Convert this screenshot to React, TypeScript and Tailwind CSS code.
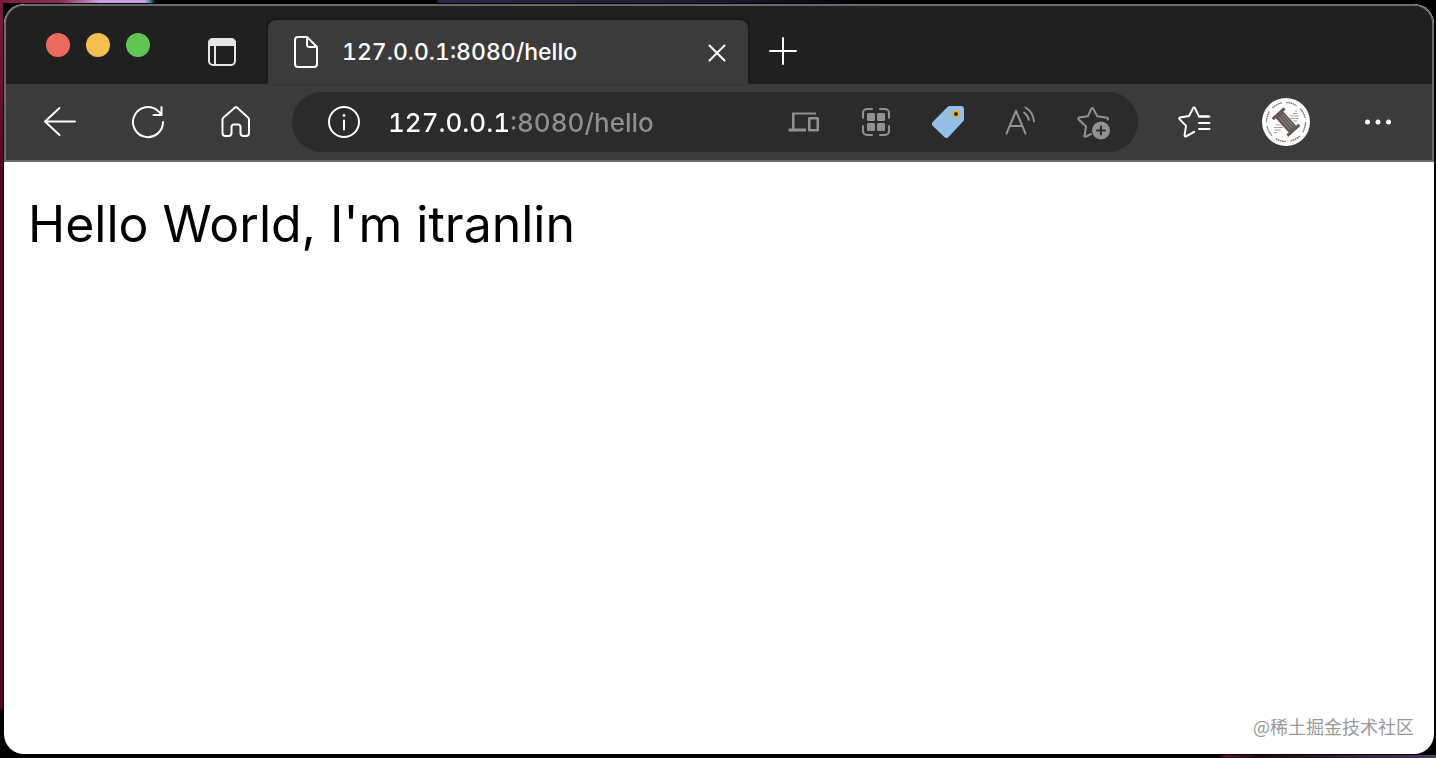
import type { ReactNode } from 'react';

const HOST = '127.0.0.1';
const PATH = ':8080/hello';

function IconButton({ label, children }: { label: string; children: ReactNode }) {
  return (
    <button aria-label={label} className="flex size-8 shrink-0 items-center justify-center text-white">
      {children}
    </button>
  );
}

function Stroke({ children, width = 2 }: { children: ReactNode; width?: number }) {
  return (
    <svg viewBox="0 0 32 32" className="size-8 overflow-visible" fill="none" stroke="currentColor" strokeWidth={width} strokeLinecap="round" strokeLinejoin="round">
      {children}
    </svg>
  );
}

function TabStrip() {
  return (
    <div className="flex h-[78px] items-end bg-[#202020]">
      <div className="flex h-[78px] items-start gap-4 pt-[27px] pl-10">
        <button aria-label="Close window" className="size-6 rounded-full bg-[#ed6a5e]" />
        <button aria-label="Minimize window" className="size-6 rounded-full bg-[#f5bf4f]" />
        <button aria-label="Zoom window" className="size-6 rounded-full bg-[#61c554]" />
      </div>
      <div className="flex h-16 items-center pr-[30px] pl-[56px]">
        <button aria-label="Tab actions" className="size-8 text-[#e6e6e6]">
          <svg viewBox="0 0 32 32" className="size-8" fill="none" stroke="currentColor" strokeWidth="2">
            <rect x="3" y="3" width="26" height="26" rx="4" />
            <path d="M3 9V7a4 4 0 0 1 4-4h18a4 4 0 0 1 4 4v2z" fill="currentColor" />
            <path d="M9 9v20" />
          </svg>
        </button>
      </div>
      <div className="flex h-16 w-[480px] items-center rounded-t-lg bg-[#3b3b3b] pr-[15px] pl-[22px] shadow-[0_-1px_3px_#111]">
        <svg viewBox="0 0 32 32" className="size-8 text-white" fill="none" stroke="currentColor" strokeWidth="2" strokeLinejoin="round">
          <path d="M8 1h9l10 10V28a3 3 0 0 1-3 3H8a3 3 0 0 1-3-3V4a3 3 0 0 1 3-3z" />
          <path d="M17 1v7.500a2.500 2.500 0 0 0 2.500 2.500h7.500" />
        </svg>
        <span className="ml-5 flex-1 font-[Inter,sans-serif] text-[23px] leading-8 font-medium text-white tabular-nums">{HOST + PATH}</span>
        <IconButton label="Close tab">
          <Stroke>
            <path d="M8.500 9.500l15 15M23.500 9.500l-15 15" />
          </Stroke>
        </IconButton>
      </div>
      <div className="flex h-16 items-center pl-[19px]">
        <IconButton label="New tab">
          <Stroke>
            <path d="M16 2v26M3 15h26" />
          </Stroke>
        </IconButton>
      </div>
    </div>
  );
}

function AddressBar() {
  return (
    <div className="mx-10 flex h-[60px] min-w-0 flex-1 items-center rounded-full bg-[#2b2b2b] pr-[30px] pl-9">
      <IconButton label="View site information">
        <Stroke>
          <circle cx="16" cy="16" r="15" />
          <path d="M16 14.500v9" />
          <circle cx="16" cy="9.500" r="1.400" fill="currentColor" stroke="none" />
        </Stroke>
      </IconButton>
      {/* the host is drawn brighter than the port and path */}
      <input
        aria-label="Address"
        defaultValue={HOST + PATH}
        spellCheck={false}
        className="ml-7 h-10 min-w-0 flex-1 bg-linear-to-r from-white from-[121px] to-[#8f8f8f] to-[121px] bg-clip-text font-[Inter,sans-serif] text-[26px] font-medium text-transparent tabular-nums outline-none"
      />
      <div className="flex items-center gap-10 *:text-[#929292]">
        <IconButton label="Send to your devices">
          <svg viewBox="0 0 32 32" className="size-8" fill="currentColor">
            <path d="M4 6.500h24v2H6.500v14H18v3H0.500v-3H4z" />
            <path fillRule="evenodd" d="M21.500 11h8a1.500 1.500 0 0 1 1.500 1.500v11.500a1.500 1.500 0 0 1-1.500 1.500h-8a1.500 1.500 0 0 1-1.500-1.500V12.500a1.500 1.500 0 0 1 1.500-1.500zM22.500 13.500v9.500h6v-9.500z" />
          </svg>
        </IconButton>
        <IconButton label="Apps">
          <Stroke>
            <path d="M3 12V7a4 4 0 0 1 4-4h5M20 3h5a4 4 0 0 1 4 4v5M29 20v5a4 4 0 0 1-4 4h-5M12 29H7a4 4 0 0 1-4-4v-5" />
            <g fill="currentColor" stroke="none">
              <rect x="7" y="7" width="8" height="8" rx="1.500" />
              <rect x="17" y="7" width="8" height="8" rx="1.500" />
              <rect x="7" y="17" width="8" height="8" rx="1.500" />
              <rect x="17" y="17" width="8" height="8" rx="1.500" />
            </g>
          </Stroke>
        </IconButton>
        <IconButton label="Shopping">
          <svg viewBox="0 0 32 32" className="size-8">
            <path d="M18 0h11a3 3 0 0 1 3 3v10c0 1-.4 2-1 2.600L16.500 31a3 3 0 0 1-4.200 0L.9 20a3 3 0 0 1 0-4.200L15.500 1A4 4 0 0 1 18 0z" fill="#94bfe8" />
            <circle cx="24" cy="8" r="3" fill="#2b2b2b" stroke="#e0b13f" strokeWidth="2" />
          </svg>
        </IconButton>
        <IconButton label="Read aloud">
          <Stroke>
            <path d="M2.500 27.500L12 5l9.500 22.500M6 20h12M20 6.500a13 13 0 0 1 5 7.500M21.500 1.500a18 18 0 0 1 8.500 14" />
          </Stroke>
        </IconButton>
        <IconButton label="Add to favorites">
          <Stroke>
            <path d="M8.500 30.500l1.500-10-7.500-7.200a1 1 0 0 1 .6-1.700l8.700-1.300 3.600-7.700a1 1 0 0 1 1.800 0l4 7.700 10 1.500c.9.100 1.200 1 .4 1.800M8.500 29.500c-.2 1.100.7 1.600 1.500 1.100l5-2.600" />
            <circle cx="25" cy="24.500" r="9" fill="currentColor" stroke="none" />
            <path d="M25 20.500v8M21 24.500h8" stroke="#2b2b2b" />
          </Stroke>
        </IconButton>
      </div>
    </div>
  );
}

function Avatar() {
  return (
    <button aria-label="Profile" className="size-12 shrink-0 rounded-full">
      <svg viewBox="0 0 48 48" className="size-12">
        <circle cx="24" cy="24" r="24" fill="#fdfdfd" />
        <circle cx="24" cy="24" r="19.500" fill="none" stroke="#77736f" strokeWidth="1.300" strokeDasharray="1.500 .5 2 .5 1.500 .5 2 .5 1.500 4.800" />
        <g transform="rotate(-42 24 24)" fill="#5f5754">
          <rect x="19" y="14" width="10" height="20" />
          <rect x="16" y="11.500" width="16" height="3" />
          <rect x="16" y="33.500" width="16" height="3" />
          <path d="M22 16v16M24.500 16v16M27 16v16" stroke="#aaa5a2" strokeWidth="0.700" />
        </g>
        <g stroke="#aaa6a3" strokeWidth="1">
          <path d="M33 13h2M31 15.500h4.500M28 18h8.500M27 20.500h10M31 23h4M12 34.500h3M12.500 32h6M12 29.500h9M13.500 27h6" />
        </g>
      </svg>
    </button>
  );
}

function Toolbar() {
  return (
    <div className="flex h-[76px] items-center bg-[#3b3b3b] px-[38px]">
      <div className="flex items-center gap-14">
        <IconButton label="Back">
          <Stroke>
            <path d="M31 15.500H1M15.500 2l-14.500 13.500L15.500 29" />
          </Stroke>
        </IconButton>
        <IconButton label="Refresh">
          <Stroke>
            <path d="M31 16A15 15 0 1 1 26 4.900l3.500 3.500M29.500 1v8h-8" />
          </Stroke>
        </IconButton>
        <IconButton label="Home">
          <Stroke>
            <path d="M15 1.500a1.500 1.500 0 0 1 2 0l11 10c.6.500 1 1.300 1 2V27a3 3 0 0 1-3 3h-2.500a3 3 0 0 1-3-3v-6a2.500 2.500 0 0 0-2.500-2.500h-4a2.500 2.500 0 0 0-2.500 2.500v6a3 3 0 0 1-3 3H5.500a3 3 0 0 1-3-3V13.500c0-.8.400-1.500 1-2z" />
          </Stroke>
        </IconButton>
      </div>
      <AddressBar />
      <div className="flex items-center gap-[52px]">
        <IconButton label="Favorites">
          <Stroke>
            <path d="M30.500 10.500H21l-4-8.200a1 1 0 0 0-1.900 0l-4 7.600-9.100 1.500a1 1 0 0 0-.5 1.700l6.500 6.700-1.400 9.500c-.1.900.8 1.500 1.500 1.100l8-4.600" />
            <path d="M21 10.500h10.500M21 17h10.500M21 23h10.500" />
          </Stroke>
        </IconButton>
        <Avatar />
        <IconButton label="Settings and more">
          <svg viewBox="0 0 32 32" className="size-8" fill="currentColor">
            <circle cx="5.500" cy="16" r="2.500" />
            <circle cx="16" cy="16" r="2.500" />
            <circle cx="26.500" cy="16" r="2.500" />
          </svg>
        </IconButton>
      </div>
    </div>
  );
}

export default function App() {
  return (
    <div className="flex min-h-screen flex-col bg-black bg-[linear-gradient(90deg,#7a1b3d_0,#8c2a55_60px,#c9a0e0_100px,#c9a0e0_145px,#2c7a96_151px,#000_155px,#000_436px,#2c2745_438px,#1d1930_720px,#000_880px),linear-gradient(180deg,#7a1b3d_0,#4a0a22_180px,#4a0a22_708px,#000_712px),linear-gradient(90deg,#000_0,#000_1218px,#5a1526_1226px,#1a0a10_1260px,#4a3a60_1436px)] bg-[length:100%_3px,3px_100%,100%_3px] bg-[position:0_0,0_0,0_100%] bg-no-repeat py-1 pr-0.5 pl-1">
      <div className="flex flex-1 flex-col overflow-hidden rounded-[20px] bg-white">
        <header className="rounded-t-[20px] border-2 border-[#6a6a6a] bg-[#3b3b3b]">
          <div className="overflow-hidden rounded-t-[18px]">
            <TabStrip />
            <Toolbar />
          </div>
        </header>
        <main className="flex flex-1 flex-col justify-between">
          <p className="px-6 pt-7 font-[Inter,sans-serif] text-[50px] leading-[68px] text-black">Hello World, I'm itranlin</p>
          <p className="self-end pr-5 pb-3.5 font-['Noto_Sans_CJK_SC',sans-serif] text-lg leading-7 text-[#999]">@稀土掘金技术社区</p>
        </main>
      </div>
    </div>
  );
}
